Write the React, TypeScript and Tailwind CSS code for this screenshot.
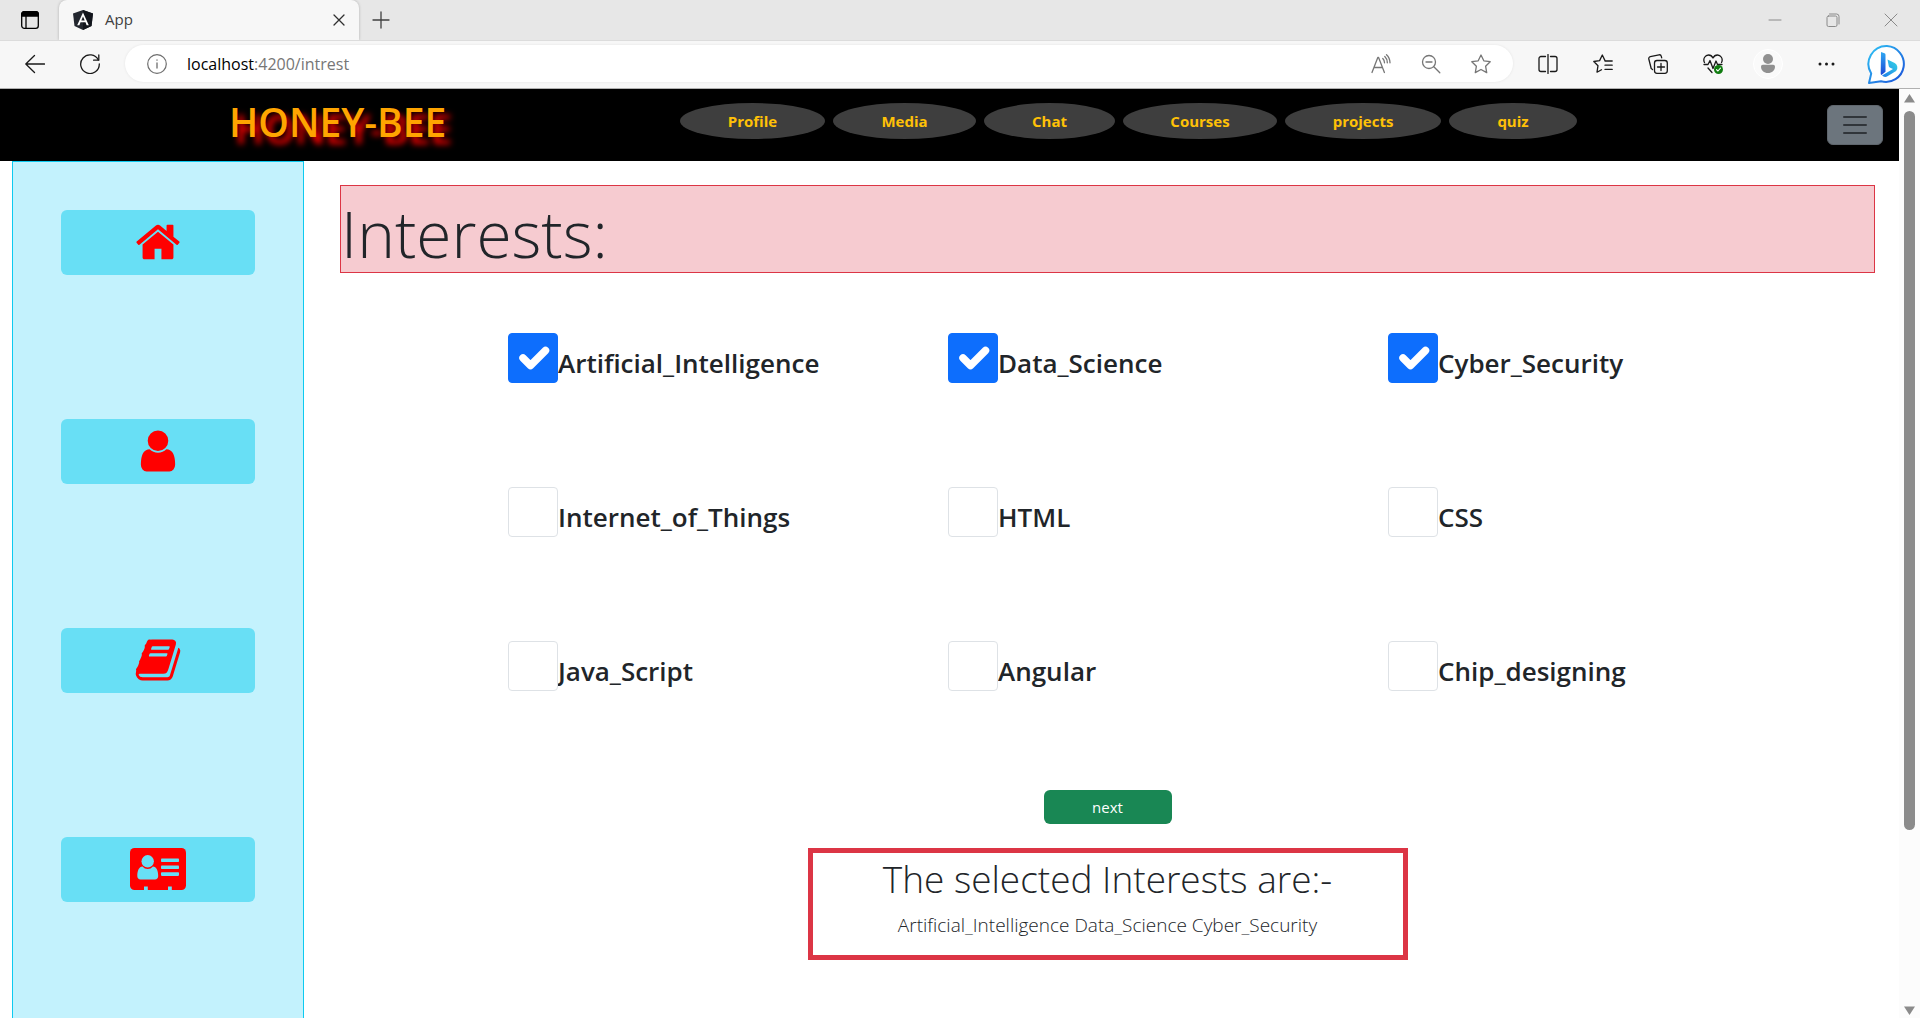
import React, { useState } from "react";

type IconProps = { children: React.ReactNode; size?: string; box?: string };

function Icon({ children, size = "size-5", box = "0 0 20 20" }: IconProps) {
  return (
    <svg
      viewBox={box}
      className={size}
      fill="none"
      stroke="currentColor"
      strokeWidth="1.3"
      strokeLinecap="round"
      strokeLinejoin="round"
      aria-hidden="true"
    >
      {children}
    </svg>
  );
}

function ToolButton({ label, children, tone = "text-[#1a1a1a]" }: { label: string; children: React.ReactNode; tone?: string }) {
  return (
    <button aria-label={label} className={`flex h-9 w-10 shrink-0 items-center justify-center ${tone}`}>
      {children}
    </button>
  );
}

function TabStrip() {
  return (
    <div className="flex h-10 shrink-0 items-center bg-[#e7e7e7]">
      <button aria-label="Tab actions" className="flex h-10 w-[59px] items-center justify-center text-black">
        <Icon>
          <rect x="1.7" y="1.7" width="16.6" height="16.6" rx="2.6" />
          <path d="M1.7 6V4a2.3 2.3 0 0 1 2.3-2.3h12A2.3 2.3 0 0 1 18.3 4v2z" fill="currentColor" />
          <path d="M6 6v12" />
        </Icon>
      </button>
      <div className="flex h-10 w-[300px] items-center rounded-t-lg bg-[#f7f7f7] pr-1.5 pl-3.5 shadow-[0_0_3px_rgba(0,0,0,0.25)] [clip-path:inset(-4px_-4px_0px_-4px)]">
        <svg viewBox="0 0 20 20" className="size-5" aria-hidden="true">
          <path d="M10 0 20 3.4 18.5 16 10 20 1.5 16 0 3.4z" fill="#23272f" />
          <path d="M10 0 20 3.4 18.5 16 10 20z" fill="#12151c" />
          <path d="M10 2.4 4.2 15.2h2.2l1.1-2.9h5l1.1 2.9h2.2zm0 4.2 1.7 4H8.3z" fill="#fff" fillRule="evenodd" />
        </svg>
        <span className="ml-3 flex-1 pb-0.5 text-[15px] text-[#404040]">App</span>
        <button aria-label="Close tab" className="flex size-7 items-center justify-center text-[#303030]">
          <Icon size="size-3" box="0 0 12 12">
            <path d="m1 1 10 10M11 1 1 11" />
          </Icon>
        </button>
      </div>
      <button aria-label="New tab" className="ml-1.5 flex size-8 items-center justify-center text-[#404040]">
        <Icon size="size-[18px]" box="0 0 18 18">
          <path d="M9 1v16M1 9h16" />
        </Icon>
      </button>
      <div className="flex-1" />
      <div className="flex text-[#8a8a8a]">
        <button aria-label="Minimize" className="flex h-10 w-[58px] items-center justify-center">
          <Icon size="size-3.5" box="0 0 14 14">
            <path d="M1 7h12" strokeWidth="1" />
          </Icon>
        </button>
        <button aria-label="Restore" className="flex h-10 w-[58px] items-center justify-center">
          <Icon size="size-3.5" box="0 0 14 14">
            <rect x="1" y="3" width="10" height="10.5" rx="1.5" strokeWidth="1" />
            <path d="M3.5 1h7.2A2.5 2.5 0 0 1 13 3.500V11" strokeWidth="1" />
          </Icon>
        </button>
        <button aria-label="Close window" className="flex h-10 w-[58px] items-center justify-center">
          <Icon size="size-3.5" box="0 0 14 14">
            <path d="m1 1 12 12M13 1 1 13" strokeWidth="1" />
          </Icon>
        </button>
      </div>
    </div>
  );
}

function Toolbar() {
  return (
    <div className="flex h-[49px] shrink-0 items-center gap-[15px] border-t border-b border-t-[#dcdcdc] border-b-[#b0b0b0] bg-[#f7f7f7] pr-[13px] pb-0.5 pl-[15px]">
      <ToolButton label="Back">
        <Icon>
          <path d="M19.500 10H.8M9.500 1.500.8 10l8.700 8.500" />
        </Icon>
      </ToolButton>
      <ToolButton label="Reload">
        <Icon>
          <path d="M18.300 6A9.300 9.300 0 1 0 19.300 10" />
          <path d="M18.800 1v5.200h-5.200" />
        </Icon>
      </ToolButton>
      <div className="flex h-[37px] flex-1 items-center rounded-full bg-white pr-3 pl-[22px] shadow-[0_0_3px_rgba(0,0,0,0.08)]">
        <button aria-label="View site information" className="text-[#6e6e6e]">
          <Icon>
            <circle cx="10" cy="10" r="9.300" strokeWidth="1.200" />
            <path d="M10 9v5M10 6v.2" />
          </Icon>
        </button>
        <label htmlFor="address" className="ml-5 text-base text-black">
          localhost
        </label>
        <input
          id="address"
          defaultValue=":4200/intrest"
          className="min-w-0 flex-1 bg-transparent text-base text-[#767676] outline-none"
        />
        <div className="flex gap-2.5">
          <ToolButton label="Read aloud" tone="text-[#767676]">
            <Icon>
              <path d="M1 18.500 6.800 3.500h.8l5.800 15M3 13.500h8.500" />
              <path d="M11.800 4.500a6 6 0 0 1 1.700 4.300M13.800 2.500a8.500 8.500 0 0 1 2.500 6.300M15.500.8a11 11 0 0 1 3.500 8" />
            </Icon>
          </ToolButton>
          <ToolButton label="Zoom" tone="text-[#767676]">
            <Icon>
              <circle cx="8" cy="8" r="6.500" />
              <path d="m12.800 12.800 6 6M5 8h6" />
            </Icon>
          </ToolButton>
          <ToolButton label="Add to favorites" tone="text-[#767676]">
            <Icon>
              <path d="m10 1 2.800 5.800 6.400.9-4.600 4.500 1.100 6.400L10 15.500l-5.700 3.100 1.100-6.400L.8 7.700l6.400-.9z" />
            </Icon>
          </ToolButton>
        </div>
      </div>
      <div className="flex gap-[15px]">
        <ToolButton label="Split screen">
          <Icon>
            <path d="M7.500 2.500H3a2 2 0 0 0-2 2v11a2 2 0 0 0 2 2h4.500M12.500 2.500H17a2 2 0 0 1 2 2v11a2 2 0 0 1-2 2h-4.500M10 .5v19" />
          </Icon>
        </ToolButton>
        <ToolButton label="Favorites">
          <Icon>
            <path d="M13 6.800 12 6.600 9.300 1 6.600 6.600.8 7.500 5 11.700l-1 6.500 4.500-2.500M12 7h7.200M12 11.200h7.200M12 15.400h7.200" />
          </Icon>
        </ToolButton>
        <ToolButton label="Collections">
          <Icon>
            <rect x="6.500" y="6.500" width="12.800" height="12.800" rx="2.500" />
            <path d="M13 9.500v7M9.500 13h7" />
            <path d="M4.500 15.500 3.200 14.500.8 5a2 2 0 0 1 1.500-2.400L11 .8a2 2 0 0 1 2.300 1.500l.4 1.500" />
          </Icon>
        </ToolButton>
        <ToolButton label="Browser essentials">
          <Icon>
            <path d="M1.500 8.500C-.5 4.500 2.500 1 5.500 1 8 1 9.300 2.500 10 4c.7-1.500 2-3 4.500-3 3 0 6 3.500 4 7.500" />
            <path d="M1 10.500h4l2-4 3 8 3-7.500 1.500 3.500H19M5 14l4 4.500" />
            <circle cx="15.500" cy="15.500" r="4.500" fill="#107c10" stroke="none" />
            <path d="m13.500 15.600 1.400 1.400 2.600-2.800" stroke="#fff" strokeWidth="1.100" />
          </Icon>
        </ToolButton>
      </div>
      <div className="flex gap-[18px]">
        <ToolButton label="Profile account">
          <svg viewBox="0 0 30 30" className="size-[30px]" aria-hidden="true">
            <circle cx="15" cy="15" r="14.500" fill="#fafafa" stroke="#fff" />
            <circle cx="15" cy="10" r="5" fill="#919191" />
            <path d="M8 17.500a1.800 1.800 0 0 1 1.800-1.800h10.400a1.800 1.800 0 0 1 1.800 1.800c0 4-3 6.500-7 6.500s-7-2.500-7-6.500z" fill="#919191" />
          </svg>
        </ToolButton>
        <ToolButton label="Settings and more">
          <Icon>
            <g fill="currentColor" stroke="none">
              <circle cx="4" cy="10" r="1.500" />
              <circle cx="10.500" cy="10" r="1.500" />
              <circle cx="17" cy="10" r="1.500" />
            </g>
          </Icon>
        </ToolButton>
      </div>
      <button aria-label="Bing" className="ml-1.5 shrink-0">
        <svg viewBox="0 0 40 40" className="size-10" aria-hidden="true">
          <defs>
            <linearGradient id="ring" x1="0" y1="0" x2="1" y2="1">
              <stop offset="0" stopColor="#2fc4f5" />
              <stop offset="1" stopColor="#1b4fd8" />
            </linearGradient>
            <linearGradient id="stem" x1="0" y1="0" x2="0" y2="1">
              <stop offset="0" stopColor="#2fa8f2" />
              <stop offset="1" stopColor="#1b48d6" />
            </linearGradient>
            <linearGradient id="bowl" x1="1" y1="0" x2="0" y2="1">
              <stop offset="0" stopColor="#35d6e6" />
              <stop offset="1" stopColor="#1f7de8" />
            </linearGradient>
          </defs>
          <path d="M20 2a18 18 0 1 1-6 35.300L2 39l2.200-9.500A18 18 0 0 1 20 2z" fill="#fff" stroke="url(#ring)" strokeWidth="2" strokeLinejoin="round" />
          <path d="m14 8 3.500 1.300a1.500 1.500 0 0 1 1 1.400v17L14.500 31a2 2 0 0 1-.8-1.600z" fill="url(#stem)" />
          <path d="m20.500 15.500 7.200 3.600a5 5 0 0 1 1.400 7.800l-8.200 5a4.500 4.500 0 0 1-5.900-.4l11-6.500-3.200-1.500a2 2 0 0 1-1-1.200z" fill="url(#bowl)" />
        </svg>
      </button>
    </div>
  );
}

const NAV = [
  { name: "Profile", width: "w-[145px]" },
  { name: "Media", width: "w-[143px]" },
  { name: "Chat", width: "w-[131px]" },
  { name: "Courses", width: "w-[154px]" },
  { name: "projects", width: "w-[156px]" },
  { name: "quiz", width: "w-32" },
];

function Navbar() {
  return (
    <header className="flex h-[72px] items-start bg-black pr-4">
      <h1 className="ml-[229px] w-[451px] pt-2 text-[39px] leading-[50px] font-semibold text-[#ffa500] [text-shadow:6px_7px_6px_#f00]">
        HONEY-BEE
      </h1>
      <nav className="flex gap-2 pt-3.5">
        {NAV.map((item) => (
          <a
            key={item.name}
            href={`#${item.name}`}
            className={`flex h-9 items-center justify-center rounded-[50%] bg-[#3e3e3e] text-[15px] font-bold text-[#ffc107] ${item.width}`}
          >
            {item.name}
          </a>
        ))}
      </nav>
      <button
        aria-label="Toggle navigation"
        className="mt-4 ml-auto flex h-10 w-14 items-center justify-center rounded-md border border-[#5f666d] bg-[#6c757d] text-[#30353a]"
      >
        <svg viewBox="0 0 24 20" className="h-5 w-6" stroke="currentColor" strokeWidth="2" strokeLinecap="round" aria-hidden="true">
          <path d="M1 2h22M1 10h22M1 18h22" />
        </svg>
      </button>
    </header>
  );
}

const HOME =
  "M1408 992v480q0 26-19 45t-45 19h-384v-384h-256v384h-384q-26 0-45-19t-19-45v-480q0-1 .5-3t.5-3l575-474 575 474q1 2 1 6zm223-69l-62 74q-8 9-21 11h-3q-13 0-21-7l-692-577-692 577q-12 8-24 7-13-2-21-11l-62-74q-8-10-7-23.5t11-21.5l719-599q32-26 76-26t76 26l244 204v-195q0-14 9-23t23-9h192q14 0 23 9t9 23v408l219 182q10 8 11 21.5t-7 23.5z";
const USER =
  "M1536 1399q0 109-62.5 187t-150.5 78h-854q-88 0-150.5-78t-62.5-187q0-85 8.5-160.5t31.5-152 58.5-131 94-89 134.5-34.5q131 128 313 128t313-128q76 0 134.5 34.5t94 89 58.5 131 31.5 152 8.5 160.5zm-256-887q0 159-112.5 271.5t-271.5 112.5-271.5-112.5-112.5-271.5 112.5-271.5 271.5-112.5 271.5 112.5 112.5 271.5z";
const BOOK =
  "M1703 478q40 57 18 129l-275 906q-19 64-76.5 107.5t-122.5 43.5h-923q-77 0-148.5-53.5t-99.5-131.5q-24-67-2-127 0-4 3-27t4-37q1-8-3-21.5t-3-19.5q2-11 8-21t16.5-23.5 16.5-23.5q23-38 45-91.5t30-91.5q3-10 .5-30t-.5-28q3-11 17-28t17-23q21-36 42-92t25-90q1-9-2.500-32t.5-28q4-13 22-30.5t22-22.5q19-26 42.5-84.5t27.5-96.5q1-8-3-25.5t-2-26.5q2-8 9-18t18-23 17-21q8-12 16.500-30.5t15-35 16-36 19.5-32 26.500-23.5 36-11.5 47.5 5.5l-1 3q38-9 51-9h761q74 0 114 56t18 130l-274 906q-36 119-71.5 153.5t-128.5 34.5h-869q-27 0-38 15-11 16-1 43 24 70 144 70h923q29 0 56-15.5t35-41.5l300-987q7-22 5-57 38 15 59 43zm-1064 2q-4 13 2 22.5t20 9.5h608q13 0 25.5-9.5t16.5-22.5l21-64q4-13-2-22.5t-20-9.5h-608q-13 0-25.5 9.5t-16.5 22.5zm-83 256q-4 13 2 22.5t20 9.5h608q13 0 25.5-9.5t16.5-22.5l21-64q4-13-2-22.5t-20-9.5h-608q-13 0-25.5 9.5t-16.5 22.5z";

function Glyph({ d, box = "0 0 1792 1792" }: { d: string; box?: string }) {
  return (
    <svg viewBox={box} className="size-12 fill-current" aria-hidden="true">
      <path d={d} />
    </svg>
  );
}

function AddressCard() {
  return (
    <svg viewBox="0 0 56 48" className="h-12 w-14" aria-hidden="true">
      <rect y="3" width="56" height="42" rx="4.500" fill="currentColor" />
      <g fill="#68dff5">
        <circle cx="17.700" cy="16.300" r="6.200" />
        <path d="M12.500 21.500c1.500 1.700 3.200 2.500 5.200 2.500s3.700-.8 5.200-2.500c3.600.2 5.300 4 5.300 9.500 0 2-1.400 3.500-3.200 3.500H10.500c-1.800 0-3.200-1.500-3.200-3.500 0-5.500 1.700-9.300 5.200-9.500z" />
        <rect x="31" y="13.500" width="18" height="3.600" rx=".8" />
        <rect x="31" y="20.500" width="18" height="3.600" rx=".8" />
        <rect x="31" y="27.300" width="18" height="3.600" rx=".8" />
        <path d="M14 41.500h3.800V45H14zM38 41.500h3.800V45H38z" />
      </g>
    </svg>
  );
}

const SIDE = [
  { label: "Home", icon: <Glyph d={HOME} box="-64 0 1792 1792" /> },
  { label: "User", icon: <Glyph d={USER} /> },
  { label: "Book", icon: <Glyph d={BOOK} /> },
  { label: "Address card", icon: <AddressCard /> },
];

function Sidebar() {
  return (
    <aside className="flex w-[292px] shrink-0 flex-col gap-36 border border-b-0 border-[#0dcaf0] bg-[#c3f2fd] px-12 pt-12">
      {SIDE.map((item) => (
        <button
          key={item.label}
          aria-label={item.label}
          className="flex h-[65px] shrink-0 items-start justify-center rounded-md bg-[#68dff5] pt-2 text-[#f00]"
        >
          {item.icon}
        </button>
      ))}
    </aside>
  );
}

const TOPICS = [
  "Artificial_Intelligence",
  "Data_Science",
  "Cyber_Security",
  "Internet_of_Things",
  "HTML",
  "CSS",
  "Java_Script",
  "Angular",
  "Chip_designing",
];

function Topic({ name, checked, onToggle }: { name: string; checked: boolean; onToggle: () => void }) {
  return (
    <div className="flex h-[50px] items-start">
      <span className="relative size-[50px] shrink-0">
        <input
          id={name}
          type="checkbox"
          checked={checked}
          onChange={onToggle}
          className="block size-[50px] appearance-none rounded-[4px] border border-[#dee2e6] bg-white checked:border-[#0d6efd] checked:bg-[#0d6efd]"
        />
        {checked && (
          <svg viewBox="0 0 20 20" className="pointer-events-none absolute inset-0 size-[50px]" fill="none" stroke="#fff" strokeWidth="3" strokeLinecap="round" strokeLinejoin="round" aria-hidden="true">
            <path d="m6 10 3 3 6-6" />
          </svg>
        )}
      </span>
      <label htmlFor={name} className="pt-2.5 text-[26px] leading-10 font-semibold">
        {name}
      </label>
    </div>
  );
}

function Interests() {
  const [selected, setSelected] = useState<string[]>(TOPICS.slice(0, 3));
  const toggle = (name: string) =>
    setSelected((now) => (now.includes(name) ? now.filter((n) => n !== name) : [...now, name]));

  return (
    <main className="flex min-w-0 flex-1 flex-col pt-6 pr-6 pl-9 text-[#212529]">
      <h2 className="h-[88px] border border-[#dc3545] bg-[#f6cbd0] text-[64px] leading-[96px] font-light">
        Interests:
      </h2>
      <div className="mt-[60px] grid grid-cols-3 gap-y-[104px] pr-[47px] pl-[168px]">
        {TOPICS.map((name) => (
          <Topic key={name} name={name} checked={selected.includes(name)} onToggle={() => toggle(name)} />
        ))}
      </div>
      <button className="mt-[99px] h-[34px] w-32 self-center rounded-md bg-[#198754] text-[15px] text-white">next</button>
      <section className="mt-6 h-28 w-[600px] self-center border-[5px] border-[#dc3545] text-center font-light">
        <h3 className="pt-1 text-[37px] leading-[44px]">The selected Interests are:-</h3>
        <p className="pt-2.5 text-[19px] leading-7">{selected.join(" ")}</p>
      </section>
    </main>
  );
}

function Scrollbar() {
  return (
    <div className="flex w-[21px] shrink-0 flex-col items-center bg-[#fcfcfc] pt-[5px] pb-[3px]" aria-hidden="true">
      <svg viewBox="0 0 11 9" className="h-[9px] w-[11px]" fill="#8b8b8b">
        <path d="M5.500 0 11 8.500H0z" />
      </svg>
      <div className="mt-2 w-[11px] grow-[720] basis-0 rounded-full bg-[#8b8b8b]" />
      <div className="grow-[176] basis-0" />
      <svg viewBox="0 0 11 9" className="h-[9px] w-[11px]" fill="#8b8b8b">
        <path d="M5.500 9 11 .5H0z" />
      </svg>
    </div>
  );
}

export default function App() {
  return (
    <div className="flex h-screen flex-col overflow-hidden bg-white font-['Open_Sans','Noto_Sans',sans-serif]">
      <TabStrip />
      <Toolbar />
      <div className="flex min-h-0 flex-1">
        <div className="flex min-w-0 flex-1 flex-col">
          <Navbar />
          <div className="flex min-h-0 flex-1 pl-3">
            <Sidebar />
            <Interests />
          </div>
        </div>
        <Scrollbar />
      </div>
    </div>
  );
}
